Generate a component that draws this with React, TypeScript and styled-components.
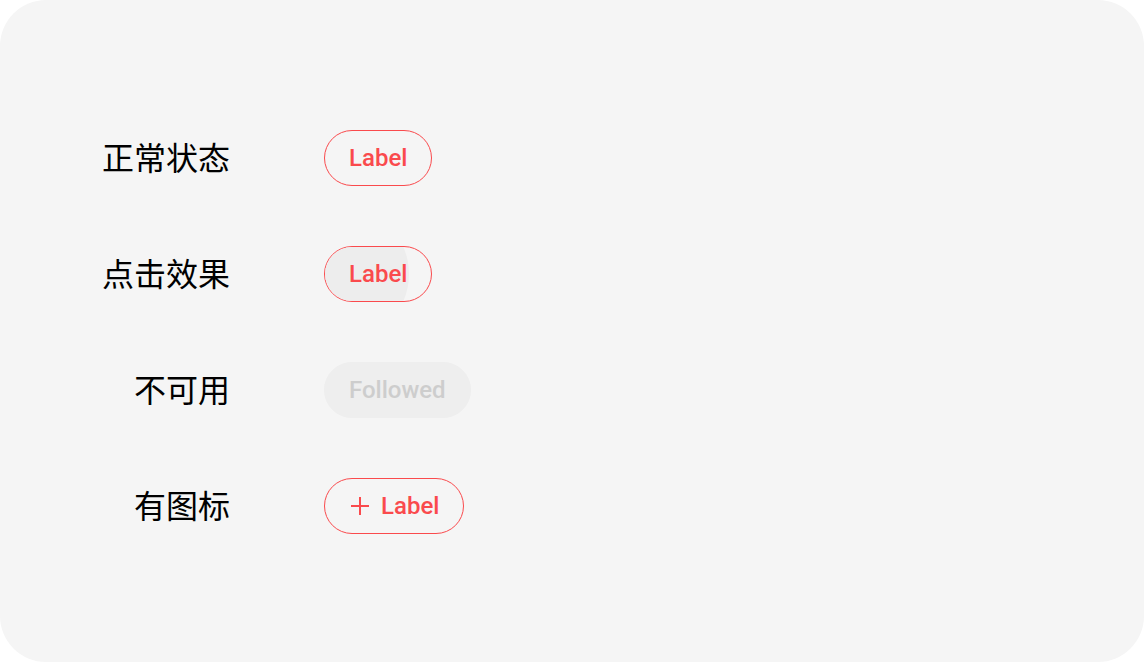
import React from "react";
import styled, { createGlobalStyle } from "styled-components";

const Global = createGlobalStyle`
  html, body { margin: 0; padding: 0; background: #ffffff; }
  body { font-family: Roboto, "Noto Sans CJK SC", sans-serif; }
`;

const Card = styled.div`
  width: 1144px;
  height: 662px;
  box-sizing: border-box;
  background: #f5f5f5;
  border-radius: 46px;
  padding-top: 130px;
  padding-left: 90px;
  display: flex;
  flex-direction: column;
  gap: 60px;
`;

const Row = styled.div`
  display: flex;
  align-items: center;
  height: 56px;
`;

const RowLabel = styled.div`
  width: 140px;
  text-align: right;
  font-family: "Noto Sans CJK SC", sans-serif;
  font-size: 32px;
  line-height: 1;
  color: #000;
  margin-right: 94px;
  margin-top: -4px;
`;

const Pill = styled.div<{ $variant: "normal" | "pressed" | "disabled"; $icon?: boolean }>`
  position: relative;
  overflow: hidden;
  box-sizing: border-box;
  height: 56px;
  padding: 0 24px 0 ${(p) => (p.$icon ? "26px" : "24px")};
  border-radius: 28px;
  display: inline-flex;
  align-items: center;
  gap: 12px;
  font-family: Roboto, sans-serif;
  font-weight: 500;
  font-size: 24px;
  color: ${(p) => (p.$variant === "disabled" ? "#cdcdcd" : "#fa4a4d")};
  border: 1px solid ${(p) => (p.$variant === "disabled" ? "#eeeeee" : "#fa4a4d")};
  background: ${(p) => (p.$variant === "disabled" ? "#eeeeee" : "transparent")};
`;

const Ripple = styled.span`
  position: absolute;
  left: -52px;
  top: -41px;
  width: 136px;
  height: 136px;
  border-radius: 50%;
  background: #ededed;
`;

const PillText = styled.span`
  position: relative;
`;

const PlusIcon = () => (
  <svg width="18" height="18" viewBox="0 0 18 18" style={{ position: "relative" }}>
    <path d="M9 0V18M0 9H18" stroke="#fa4a4d" strokeWidth="2" fill="none" />
  </svg>
);

export default function App() {
  return (
    <>
      <Global />
      <Card>
        <Row>
          <RowLabel>正常状态</RowLabel>
          <Pill $variant="normal">
            <PillText>Label</PillText>
          </Pill>
        </Row>
        <Row>
          <RowLabel>点击效果</RowLabel>
          <Pill $variant="pressed">
            <Ripple />
            <PillText>Label</PillText>
          </Pill>
        </Row>
        <Row>
          <RowLabel>不可用</RowLabel>
          <Pill $variant="disabled">
            <PillText>Followed</PillText>
          </Pill>
        </Row>
        <Row>
          <RowLabel>有图标</RowLabel>
          <Pill $variant="normal" $icon>
            <PlusIcon />
            <PillText>Label</PillText>
          </Pill>
        </Row>
      </Card>
    </>
  );
}
